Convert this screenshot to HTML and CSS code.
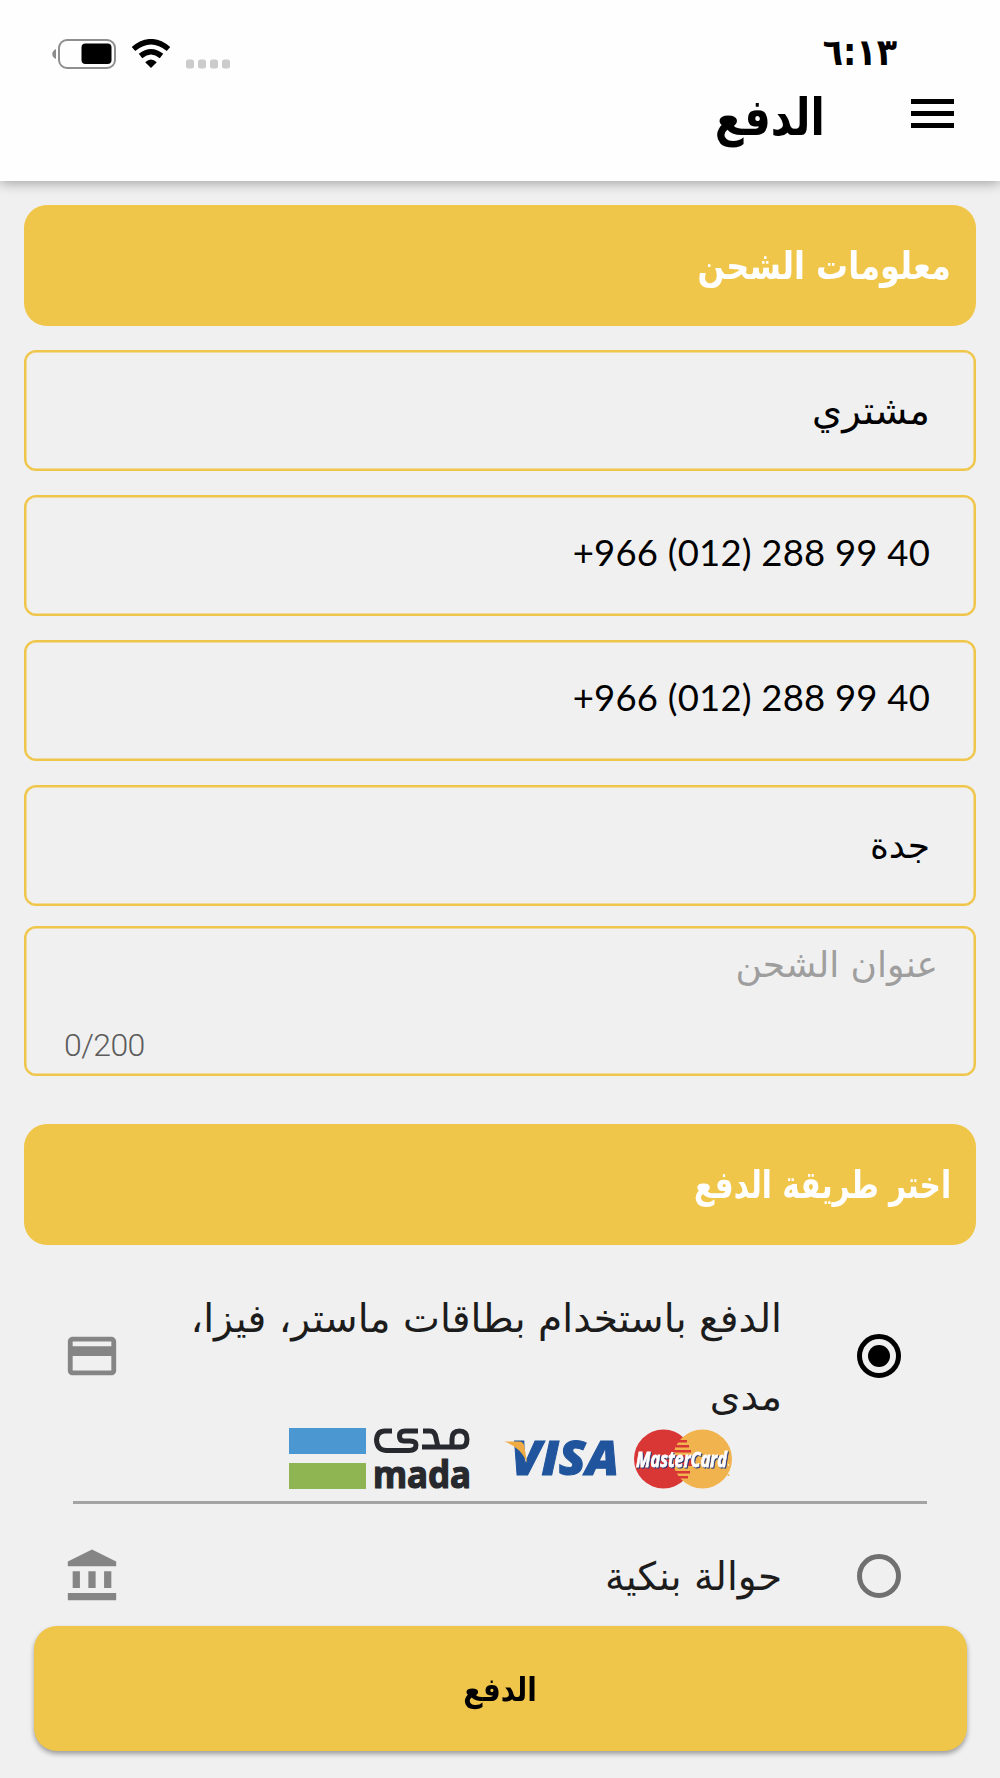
FILE: index.html
```html
<!DOCTYPE html>
<html lang="ar" dir="rtl">
<head>
  <meta charset="UTF-8" />
  <meta name="viewport" content="width=device-width, initial-scale=1.0" />
  <title>الدفع</title>
  <link rel="stylesheet" href="styles.css">
</head>
<body>
  <header class="header">
    <div class="status">
      <span class="time" dir="ltr">٦:١٣</span>
      <svg class="status-icons" width="180" height="30" viewBox="0 0 180 30">
        <path d="M4 10v10c-5-2-5-8 0-10z" fill="#8c8c8c"/>
        <rect x="7" y="1" width="56" height="28" rx="8" fill="none" stroke="#8f8f8f" stroke-width="2"/>
        <rect x="29.500" y="4.500" width="30" height="20.500" rx="4" fill="#000"/>
        <g fill="none" stroke="#000" stroke-width="5.500">
          <path d="M81.500 10Q99 -4.500 116.500 10"/>
          <path d="M88.500 17Q99 8.500 109.500 17"/>
        </g>
        <path d="M99 29l-5.800-5.800q5.800-5.400 11.600 0z"/>
        <g fill="#cbcbcb">
          <rect x="134" y="20.500" width="8" height="9" rx="2.500"/>
          <rect x="146" y="20.500" width="8" height="9" rx="2.500"/>
          <rect x="158" y="20.500" width="8" height="9" rx="2.500"/>
          <rect x="170" y="20.500" width="8" height="9" rx="2.500"/>
        </g>
      </svg>
    </div>
    <div class="toolbar">
      <div class="menu"><span></span><span></span><span></span></div>
      <h1 class="title">الدفع</h1>
    </div>
  </header>

  <main class="content">
    <h2 class="banner"><span class="ship-title">معلومات الشحن</span></h2>
    <div class="field"><span class="name">مشتري</span></div>
    <div class="field"><span class="phone" dir="ltr">+966 (012) 288 99 40</span></div>
    <div class="field"><span class="phone" dir="ltr">+966 (012) 288 99 40</span></div>
    <div class="field"><span class="city">جدة</span></div>
    <div class="field address">
      <span class="placeholder">عنوان الشحن</span>
      <span class="counter" dir="ltr">0/200</span>
    </div>

    <h2 class="banner pay-banner"><span class="pay-title">اختر طريقة الدفع</span></h2>

    <div class="option card-option">
      <span class="radio checked"></span>
      <div class="option-body">
        <div class="option-text"><span class="line">الدفع باستخدام بطاقات ماستر، فيزا،</span><span class="line">مدى</span></div>
        <div class="logos">
          <svg class="mastercard" width="98" height="60" viewBox="0 0 98 60">
            <circle cx="29.500" cy="30" r="29.500" fill="#d93636"/>
            <circle cx="68.500" cy="30" r="29.500" fill="#f0b34d"/>
            <g fill="#d93636">
              <rect x="44" y="11" width="9" height="2.500"/>
              <rect x="42" y="16" width="13" height="2.500"/>
              <rect x="40" y="21" width="17" height="2.500"/>
              <rect x="40" y="26" width="18" height="11"/>
              <rect x="40" y="42" width="16" height="2.500"/>
              <rect x="42" y="47" width="12" height="2.500"/>
            </g>
            <text class="mc-word" x="2" y="37.500" textLength="91" lengthAdjust="spacingAndGlyphs">MasterCard</text>
            <circle cx="94.500" cy="36" r=".8" fill="#fff"/>
            <circle cx="94.500" cy="46" r="1" fill="#f0b34d"/>
          </svg>
          <svg class="visa" width="114" height="36" viewBox="0 0 114 36">
            <text class="visa-word" x="7" y="34" textLength="108" lengthAdjust="spacingAndGlyphs">VISA</text>
            <path d="M0 .5h15q4.500 0 5.200 4.500l3 17Q17 6 0 .5z" fill="#f0ab42"/>
          </svg>
          <svg class="mada" width="182" height="62" viewBox="0 0 182 62">
            <rect x="0" y="0" width="77" height="26" fill="#4b97d1"/>
            <rect x="0" y="35" width="77" height="26" fill="#8fb552"/>
            <g fill="none" stroke="#27292e" stroke-width="5">
              <path d="M103 3H96Q88 3 87.500 12Q88 22 97 22.500H120Q127 22.500 127 17Q127 13 121 13H115Q110.500 13 110.500 8Q110.500 3 116 3H129"/>
              <path d="M134 3H141Q146 3 147 10L149 19H133M147 19H172Q178 19 178 11Q178 3 170.500 3Q163 3 163 11V19"/>
            </g>
            <text class="mada-word" x="84" y="60" textLength="98" lengthAdjust="spacingAndGlyphs">mada</text>
          </svg>
        </div>
      </div>
      <svg class="option-icon" width="58" height="58" viewBox="0 0 24 24" fill="#858585">
        <path d="M20 4H4c-1.110 0-1.990.89-1.990 2L2 18c0 1.110.89 2 2 2h16c1.110 0 2-.89 2-2V6c0-1.110-.89-2-2-2zm0 14H4v-6h16v6zm0-10H4V6h16v2z"/>
      </svg>
    </div>

    <div class="option bank-option">
      <span class="radio"></span>
      <div class="option-body bank-text">حوالة بنكية</div>
      <svg class="option-icon" width="58" height="58" viewBox="0 0 24 24" fill="#858585">
        <path d="M4 10v7h3v-7H4zm6.500 0v7h3v-7h-3zM2 22h20v-3H2v3zm15-12v7h3v-7h-3zm-5-9L2 6v2h20V6L12 1z"/>
      </svg>
    </div>

    <button class="pay-btn"><span class="pay-label">الدفع</span></button>
  </main>
</body>
</html>
```
FILE: styles.css
```css
* {
  box-sizing: border-box;
}
body {
  margin: 0;
  height: 1778px;
  overflow: hidden;
  background-color: #f0f0f0;
  color: #000;
  font-family: "DejaVu Sans", sans-serif;
}
h1, h2 {
  margin: 0;
}
.time, .title, .banner, .pay-btn {
  font-family: "DejaVu Sans Condensed", "DejaVu Sans", sans-serif;
  font-stretch: condensed;
  font-weight: bold;
}
.header {
  height: 181px;
  padding-top: 30px;
  background-color: #fefefe;
  box-shadow: 0 2px 12px rgba(0, 0, 0, 0.34);
}
.status {
  display: flex;
  justify-content: space-between;
  align-items: center;
  height: 48px;
  padding: 0 103px 0 52px;
}
.time {
  font-size: 37px;
  line-height: 46px;
  padding-bottom: 2px;
}
.toolbar {
  display: flex;
  align-items: center;
  height: 70px;
  padding-right: 46px;
}
.menu {
  display: flex;
  flex-direction: column;
  gap: 7px;
  width: 43px;
}
.menu span {
  height: 5px;
  background-color: #000;
}
.title {
  margin-right: 86px;
  padding-top: 10px;
  font-size: 51px;
  line-height: 70px;
  transform: scaleX(0.91);
  transform-origin: right;
}

.content {
  display: flex;
  flex-direction: column;
  padding: 24px 24px 0;
}
.banner {
  display: flex;
  align-items: center;
  height: 121px;
  padding-right: 25px;
  border-radius: 23px;
  background-color: #f0c64a;
  color: #fff;
  font-size: 38px;
}
.ship-title {
  transform: scaleX(0.935);
  transform-origin: right;
}
.pay-title {
  transform: scaleX(0.865);
  transform-origin: right;
}
.field {
  display: flex;
  align-items: center;
  height: 121px;
  margin-top: 24px;
  padding: 0 44px;
  border: 2px solid #f0c64a;
  border-radius: 12px;
  box-shadow: inset 0 0 0 0.5px #f0c64a;
  font-size: 36px;
}
.name {
  font-size: 38.500px;
}
.phone {
  font-family: Lato, sans-serif;
  font-size: 36.500px;
  letter-spacing: 0.2px;
  padding-bottom: 8px;
}
.address {
  flex-direction: column;
  align-items: stretch;
  justify-content: space-between;
  height: 150px;
  margin-top: 20px;
  padding: 7px 38px 9px 38px;
}
.placeholder {
  margin-right: -2px;
  color: #9e9e9e;
  line-height: 60px;
}
.counter {
  color: #5c5c5c;
  font-family: Roboto, sans-serif;
  font-size: 32px;
  font-weight: 300;
  letter-spacing: -0.6px;
  line-height: 40px;
}
.pay-banner {
  margin-top: 48px;
}

.option {
  display: flex;
  align-items: center;
  margin: 0 49px;
  padding-right: 26px;
  color: #1c1c1c;
  font-size: 39px;
}
.card-option {
  height: 259px;
  border-bottom: 3px solid #a3a3a3;
}
.bank-option {
  height: 122px;
  padding-top: 22px;
}
.radio {
  display: flex;
  align-items: center;
  justify-content: center;
  flex: none;
  width: 44px;
  height: 44px;
  border: 5px solid #707070;
  border-radius: 50%;
}
.radio.checked {
  border-color: #000;
}
.radio.checked::after {
  content: "";
  width: 22px;
  height: 22px;
  border-radius: 50%;
  background-color: #000;
}
.option-body {
  flex: 1;
  margin-right: 75px;
}
.card-option .option-body {
  align-self: flex-start;
  padding-top: 35px;
}
.option-icon {
  flex: none;
  margin-left: -10px;
}
.card-option .radio, .card-option .option-icon {
  margin-bottom: 35px;
}
.line {
  display: block;
  height: 78px;
  font-size: 39.200px;
  line-height: 78px;
  white-space: nowrap;
}
.logos {
  display: flex;
  align-items: center;
  gap: 16px;
  height: 62px;
  margin-top: -8px;
  padding-right: 50px;
}
.logos svg {
  overflow: visible;
}
.logos text {
  direction: ltr;
}
.visa {
  margin-left: 17px;
}
.mc-word {
  fill: #fff;
  stroke: #fff;
  stroke-width: 0.8px;
  filter: drop-shadow(1.500px 1.500px 0 #2b3a75);
  font-family: "Open Sans", sans-serif;
  font-size: 22px;
  font-weight: bold;
  font-style: italic;
}
.visa-word {
  fill: #20549d;
  stroke: #20549d;
  stroke-width: 1px;
  font-family: "Open Sans", sans-serif;
  font-size: 47px;
  font-weight: 800;
  font-style: italic;
}
.mada-word {
  fill: #27292e;
  stroke: #27292e;
  stroke-width: 1.200px;
  font-family: "Noto Sans", sans-serif;
  font-size: 37px;
  font-weight: bold;
}

.pay-btn {
  align-self: center;
  width: 933px;
  height: 125px;
  padding: 0;
  border: 0;
  border-radius: 23px;
  background-color: #f0c64a;
  box-shadow: 0 3px 5px rgba(0, 0, 0, 0.35);
  color: #000;
  font-size: 33px;
}
.pay-label {
  display: inline-block;
  padding-top: 2px;
  transform: scaleX(0.94);
}
```
